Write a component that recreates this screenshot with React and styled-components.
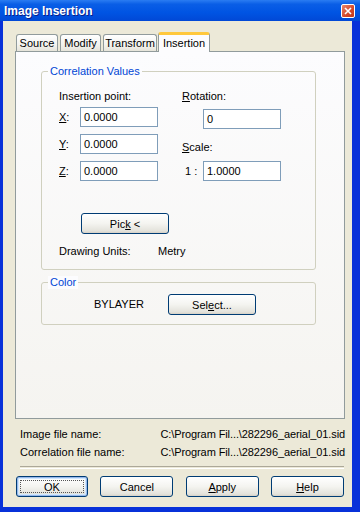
import styled, { createGlobalStyle } from "styled-components";

const Global = createGlobalStyle`
  html, body {
    margin: 0;
    padding: 0;
    background: #ece9d8;
  }
  body {
    font-family: "Liberation Sans", Arial, sans-serif;
    font-size: 11px;
    color: #000;
  }
`;

const Window = styled.div`
  width: 360px;
  height: 512px;
  box-sizing: border-box;
  display: flex;
  flex-direction: column;
  background: #0831d9;
  padding: 0 8px 5px 3px;
`;

const TitleBar = styled.div`
  height: 21px;
  margin: 0 -8px 0 -3px;
  padding: 0 5px 0 4px;
  display: flex;
  align-items: center;
  justify-content: space-between;
  background: linear-gradient(#2a7cf2 0%, #0a5ee6 20%, #0054e3 60%, #0148d6 100%);
`;

const Title = styled.div`
  color: #fff;
  font-weight: bold;
  font-size: 12px;
  text-shadow: 1px 1px 0 #0a1e8a;
`;

const CloseButton = styled.div`
  width: 12px;
  height: 12px;
  border: 1px solid #fff;
  border-radius: 2px;
  background: linear-gradient(135deg, #e8866a, #d5472a 60%, #c03a1e);
  display: flex;
  align-items: center;
  justify-content: center;
`;

const Body = styled.div`
  flex: 1;
  background: #ece9d8;
  display: flex;
  flex-direction: column;
  padding: 10px 7px 0 12px;
`;

const TabRow = styled.div`
  display: flex;
  align-items: flex-end;
  height: 20px;
  padding-left: 1px;
  position: relative;
  z-index: 1;
`;

const Tab = styled.div`
  height: ${(p) => (p.$active ? "20px" : "17px")};
  box-sizing: border-box;
  width: ${(p) => p.$w}px;
  margin-right: ${(p) => (p.$active ? "0" : "2px")};
  margin-left: ${(p) => (p.$active ? "-1px" : "0")};
  margin-bottom: ${(p) => (p.$active ? "-1px" : "0")};
  border: 1px solid #919b9c;
  border-bottom: none;
  border-top: ${(p) => (p.$active ? "3px solid #ffc83c" : "1px solid #919b9c")};
  border-radius: 3px 3px 0 0;
  background: ${(p) =>
    p.$active ? "#fcfcfe" : "linear-gradient(#ffffff, #f3f3ef 60%, #e6e4da)"};
  display: flex;
  align-items: center;
  justify-content: center;
  padding-bottom: ${(p) => (p.$active ? "2px" : "0")};
`;

const Panel = styled.div`
  height: 368px;
  box-sizing: border-box;
  border: 1px solid #919b9c;
  background: linear-gradient(#fcfcfe, #f5f4f0);
  padding: 19px 28px 0 25px;
  display: flex;
  flex-direction: column;
  gap: 12px;
`;

const Group = styled.div`
  position: relative;
  height: ${(p) => p.$h}px;
  box-sizing: border-box;
  border: 1px solid #d0d0bf;
  border-radius: 3px;
`;

const GroupLabel = styled.div`
  position: absolute;
  top: -7px;
  left: 6px;
  padding: 0 2px;
  background: #fcfcfe;
  color: #0046d5;
  line-height: 13px;
`;

const Columns = styled.div`
  display: grid;
  grid-template-columns: 123px 1fr;
  padding: 18px 0 0 17px;
`;

const Col = styled.div`
  display: flex;
  flex-direction: column;
`;

const Text = styled.div`
  line-height: 13px;
  height: 13px;
  margin-top: ${(p) => p.$mt || 0}px;
  white-space: nowrap;
`;

const FieldRow = styled.div`
  display: flex;
  align-items: center;
  margin-top: ${(p) => p.$mt || 0}px;
  padding-left: ${(p) => p.$pl || 0}px;
`;

const FieldLabel = styled.span`
  width: ${(p) => p.$w}px;
  line-height: 13px;
`;

const Input = styled.div`
  width: 78px;
  height: 20px;
  box-sizing: border-box;
  border: 1px solid #7f9db9;
  background: #fff;
  padding-left: 3px;
  display: flex;
  align-items: center;
`;

const Btn = styled.div`
  width: ${(p) => p.$w}px;
  height: 21px;
  box-sizing: border-box;
  border: 1px solid #003c74;
  border-radius: 3px;
  background: linear-gradient(#ffffff, #f4f4f0 50%, #e3e2db 90%, #d6d0c5);
  display: flex;
  align-items: center;
  justify-content: center;
  margin-top: ${(p) => p.$mt || 0}px;
  margin-left: ${(p) => p.$ml || 0}px;
  box-shadow: ${(p) =>
    p.$default ? "inset 0 0 0 1px #98b8ea, inset 0 0 0 2px #cee7ff" : "none"};
  position: relative;
`;

const FocusRing = styled.div`
  position: absolute;
  inset: 3px;
  border: 1px dotted #555;
`;

const UnitsRow = styled.div`
  display: flex;
  margin-top: 11px;
  padding-left: 17px;
  line-height: 13px;
`;

const ColorRow = styled.div`
  display: flex;
  align-items: center;
  padding: 11px 0 0 52px;
`;

const InfoRows = styled.div`
  display: flex;
  flex-direction: column;
  gap: 5px;
  padding: 9px 0 0 5px;
`;

const InfoRow = styled.div`
  display: flex;
  justify-content: space-between;
  line-height: 13px;
`;

const Path = styled.span`
  letter-spacing: -0.1px;
`;

const Separator = styled.div`
  height: 1px;
  margin: 7px 1px 0 5px;
  border-top: 1px solid #aca899;
  border-bottom: 1px solid #fff;
`;

const ButtonRow = styled.div`
  display: flex;
  justify-content: space-between;
  margin: 7px 1px 0 1px;
`;

const U = styled.span`
  text-decoration: underline;
  text-underline-offset: 1px;
`;

export default function App() {
  return (
    <>
      <Global />
      <Window>
        <TitleBar>
          <Title>Image Insertion</Title>
          <CloseButton>
            <svg width="8" height="8" viewBox="0 0 8 8">
              <path d="M1 1 L7 7 M7 1 L1 7" stroke="#fff" strokeWidth="1.6" />
            </svg>
          </CloseButton>
        </TitleBar>
        <Body>
          <TabRow>
            <Tab $w={42}>Source</Tab>
            <Tab $w={41}>Modify</Tab>
            <Tab $w={54}>Transform</Tab>
            <Tab $w={52} $active>
              Insertion
            </Tab>
          </TabRow>
          <Panel>
            <Group $h={199}>
              <GroupLabel>Correlation Values</GroupLabel>
              <Columns>
                <Col>
                  <Text>Insertion point:</Text>
                  <FieldRow $mt={4}>
                    <FieldLabel $w={21}>
                      <U>X</U>:
                    </FieldLabel>
                    <Input>0.0000</Input>
                  </FieldRow>
                  <FieldRow $mt={7}>
                    <FieldLabel $w={21}>
                      <U>Y</U>:
                    </FieldLabel>
                    <Input>0.0000</Input>
                  </FieldRow>
                  <FieldRow $mt={7}>
                    <FieldLabel $w={21}>
                      <U>Z</U>:
                    </FieldLabel>
                    <Input>0.0000</Input>
                  </FieldRow>
                </Col>
                <Col>
                  <Text>
                    <U>R</U>otation:
                  </Text>
                  <FieldRow $mt={6} $pl={21}>
                    <Input>0</Input>
                  </FieldRow>
                  <Text $mt={12}>
                    <U>S</U>cale:
                  </Text>
                  <FieldRow $mt={7} $pl={3}>
                    <FieldLabel $w={18}>1 :</FieldLabel>
                    <Input>1.0000</Input>
                  </FieldRow>
                </Col>
              </Columns>
              <Btn $w={88} $mt={32} $ml={39}>
                <span>
                  Pic<U>k</U> &lt;
                </span>
              </Btn>
              <UnitsRow>
                <FieldLabel $w={99}>Drawing Units:</FieldLabel>
                <span>Metry</span>
              </UnitsRow>
            </Group>
            <Group $h={43}>
              <GroupLabel>Color</GroupLabel>
              <ColorRow>
                <FieldLabel $w={74}>BYLAYER</FieldLabel>
                <Btn $w={88}>
                  <span>
                    Sel<U>e</U>ct...
                  </span>
                </Btn>
              </ColorRow>
            </Group>
          </Panel>
          <InfoRows>
            <InfoRow>
              <span>Image file name:</span>
              <Path>C:\Program Fil...\282296_aerial_01.sid</Path>
            </InfoRow>
            <InfoRow>
              <span>Correlation file name:</span>
              <Path>C:\Program Fil...\282296_aerial_01.sid</Path>
            </InfoRow>
          </InfoRows>
          <Separator />
          <ButtonRow>
            <Btn $w={72} $default>
              <FocusRing />
              OK
            </Btn>
            <Btn $w={73}>Cancel</Btn>
            <Btn $w={73}>
              <span>
                <U>A</U>pply
              </span>
            </Btn>
            <Btn $w={73}>
              <span>
                <U>H</U>elp
              </span>
            </Btn>
          </ButtonRow>
        </Body>
      </Window>
    </>
  );
}
